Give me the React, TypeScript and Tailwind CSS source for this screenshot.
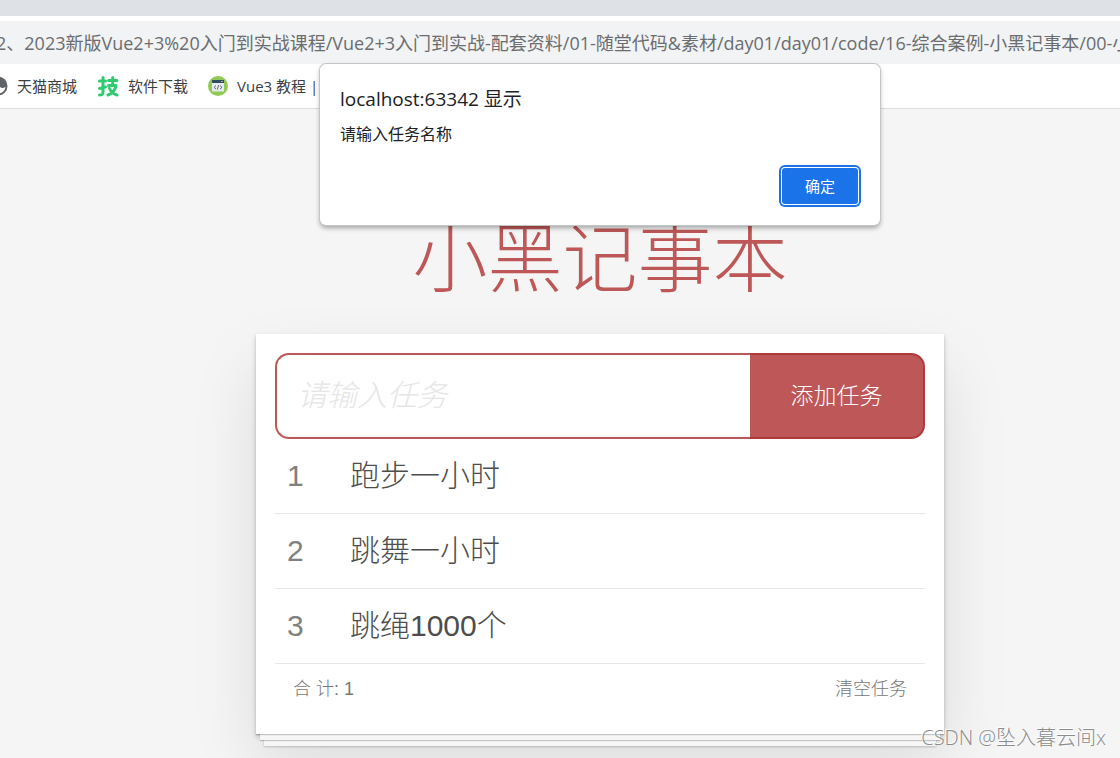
import { useState } from "react";

const tasks = ["跑步一小时", "跳舞一小时", "跳绳1000个"];

const url =
  "2、2023新版Vue2+3%20入门到实战课程/Vue2+3入门到实战-配套资料/01-随堂代码&素材/day01/day01/code/16-综合案例-小黑记事本/00-小";

function GlobeIcon() {
  return (
    <svg className="size-5 shrink-0" viewBox="0 0 20 20" aria-hidden="true">
      <circle cx="10" cy="10" r="9.500" fill="#5f6368" />
      <path d="M7 9.500h4.500c.5 2 2 2.500 3.500 2.500 1 0 1.500-1 2.500-1-.3 3-2.500 5.500-5.500 6.300 0-1.800-.5-2.800-2.500-2.800V12l-2.500-2.500z" fill="#fff" />
      <path d="M3 8c3-.5 4-2 5-4.500" stroke="#fff" strokeWidth="1.500" fill="none" />
    </svg>
  );
}

function SkillIcon() {
  return (
    <svg
      className="size-[22px] shrink-0"
      viewBox="0 0 22 22"
      fill="none"
      stroke="#2ecc71"
      strokeWidth="3"
      strokeLinecap="round"
      strokeLinejoin="round"
      aria-hidden="true"
    >
      <path d="M2.500 6h6M6 2.500v15c0 1.800-.8 2.500-3.500 2.500M2.500 13.500l6-1.500" />
      <path d="M11.500 5.500h8.500M15.700 2.500v7.500M11.500 10.500h7.500c-.8 4.500-3.500 8-8 9.500M12.500 13.500c1.500 3.500 4 5.500 7.500 6.500" />
    </svg>
  );
}

function CodeIcon() {
  return (
    <svg className="size-5 shrink-0" viewBox="0 0 20 20" aria-hidden="true">
      <circle cx="10" cy="10" r="10" fill="#90c953" />
      <path d="M4 4.500h12v11H4z" fill="#e6e9ee" />
      <path d="M4 4h12v3H4z" fill="#324a5e" />
      <path d="M13.500 5h1v1h-1z" fill="#fff" />
      <path d="M8 9.500L6 11.300l2 1.800M12 9.500l2 1.800-2 1.800M10.700 9l-1.400 4.600" stroke="#56606b" strokeWidth=".9" fill="none" />
    </svg>
  );
}

function BrowserBar() {
  return (
    <header className="font-['Open_Sans','Noto_Sans_CJK_SC',sans-serif] font-normal">
      <div className="h-4 bg-[#dee1e6]" />
      <div className="bg-white pt-[5px]">
        <div className="flex h-[43px] items-center overflow-hidden bg-[#f1f3f4] text-lg whitespace-nowrap text-[#6b6d70]">
          <span className="-ml-1">{url}</span>
        </div>
      </div>
      <nav className="flex h-[45px] items-center gap-5 overflow-hidden border-b border-[#dadcdf] bg-white text-[15px] whitespace-nowrap text-[#3c4043]">
        <a href="#tmall" className="-ml-3 flex items-center gap-[9px]">
          <GlobeIcon />
          天猫商城
        </a>
        <a href="#download" className="flex items-center gap-[9px]">
          <SkillIcon />
          软件下载
        </a>
        <a href="#vue3" className="flex items-center gap-[9px]">
          <CodeIcon />
          Vue3 教程 |
        </a>
      </nav>
    </header>
  );
}

function AlertDialog({ onClose }: { onClose: () => void }) {
  return (
    <div className="absolute inset-x-0 top-16 flex justify-center pl-20 font-['Open_Sans','Noto_Sans_CJK_SC',sans-serif] font-normal">
      <div
        role="alertdialog"
        aria-labelledby="alert-title"
        aria-describedby="alert-text"
        className="w-full max-w-[560px] rounded-md bg-white px-5 pt-5 pb-[21px] text-[#202124] shadow-[0_0_0_1px_#c3c6c6,0_3px_5px_rgba(0,0,0,0.35)]"
      >
        <h2 id="alert-title" className="text-[19px] leading-[30px]">
          localhost:63342 显示
        </h2>
        <p id="alert-text" className="pt-2 text-base leading-6">
          请输入任务名称
        </p>
        <div className="flex justify-end pt-[22px] pr-0.5">
          <button
            type="button"
            onClick={onClose}
            className="h-9 w-[76px] rounded-[3px] bg-[#1a73e8] text-[15px] text-white shadow-[0_0_0_1px_#fff,0_0_0_3px_#1a73e8]"
          >
            确定
          </button>
        </div>
      </div>
    </div>
  );
}

export default function App() {
  const [open, setOpen] = useState(true);

  return (
    <div className="relative min-h-screen overflow-hidden bg-[#f5f5f5] font-['Liberation_Sans','Noto_Sans_CJK_SC',sans-serif] font-light">
      <BrowserBar />
      <main className="flex flex-col items-center pt-[97px] pb-6 pl-20">
        <h1 className="text-[75px] leading-[108px] font-light text-[#be5757]">小黑记事本</h1>
        <section className="mt-5 w-full max-w-[688px] bg-white px-[19px] pt-[19px] text-[#4d4d4d] shadow-[0_1px_1px_rgba(0,0,0,0.2),0_10px_0_-4px_#f6f6f6,0_11px_1px_-4px_rgba(0,0,0,0.2),0_20px_0_-8px_#f6f6f6,0_21px_2px_-8px_rgba(0,0,0,0.2),0_3px_5px_rgba(0,0,0,0.2),0_31px_63px_rgba(0,0,0,0.1)]">
          <form className="flex h-[86px]" onSubmit={(e) => e.preventDefault()}>
            <input
              aria-label="请输入任务"
              placeholder="请输入任务"
              className="min-w-0 flex-1 rounded-l-[14px] border-2 border-r-0 border-[#be5757] bg-white px-5 text-3xl shadow-[inset_0_-2px_2px_rgba(0,0,0,0.03)] outline-none placeholder:text-[#e6e6e6] placeholder:italic"
            />
            <button
              type="submit"
              className="w-[175px] rounded-r-[14px] border-2 border-l-0 border-[#b03a3a] bg-[#be5757] text-[23px] text-white"
            >
              添加任务
            </button>
          </form>
          <ul>
            {tasks.map((task, i) => (
              <li key={task} className="flex h-[75px] items-center border-b border-[#e6e6e6] pl-3 text-3xl">
                <span className="w-[63px] text-[#808080]">{i + 1}</span>
                <span>{task}</span>
              </li>
            ))}
          </ul>
          <footer className="flex h-[70px] items-start justify-between px-[18px] pt-[13px] text-lg leading-6 text-[#777777]">
            <span>合 计: 1</span>
            <button type="button">清空任务</button>
          </footer>
        </section>
      </main>
      {open && <AlertDialog onClose={() => setOpen(false)} />}
      <div className="absolute right-3.5 bottom-1.5 font-['Open_Sans','Noto_Sans_CJK_SC',sans-serif] text-xl leading-7 text-[#8c8c8c] [text-shadow:-1px_-1px_0_#fff]">
        CSDN @坠入暮云间x
      </div>
    </div>
  );
}
